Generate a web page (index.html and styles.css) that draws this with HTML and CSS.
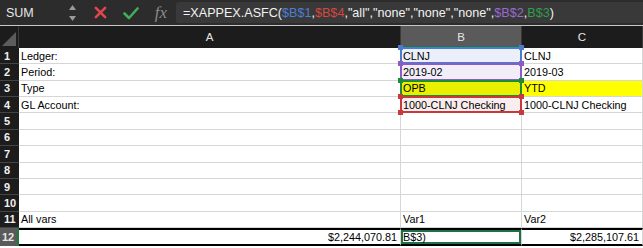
FILE: index.html
```html
<!DOCTYPE html>
<html lang="en">
<head>
    <meta charset="UTF-8">
    <title>Sheet</title>
    <link rel="stylesheet" href="styles.css">
</head>
<body>
    <div class="formula-bar">
        <div class="name-box">SUM</div>
        <div class="stepper">
            <svg width="9" height="22" viewBox="0 0 9 22">
                <path d="M4.5 3 L8 8 L1 8 Z" fill="#9a9a9a"/>
                <path d="M4.5 19 L8 14 L1 14 Z" fill="#9a9a9a"/>
            </svg>
        </div>
        <div class="fb-btn cancel">
            <svg width="13" height="13" viewBox="0 0 14 14">
                <path d="M2 2 L12 12 M12 2 L2 12" stroke="#e0474c" stroke-width="2.8" stroke-linecap="round"/>
            </svg>
        </div>
        <div class="fb-btn enter">
            <svg width="16" height="14" viewBox="0 0 16 14">
                <path d="M1.5 7.5 L6 12 L14.5 2.5" stroke="#3fae5a" stroke-width="2.6" fill="none" stroke-linecap="round" stroke-linejoin="round"/>
            </svg>
        </div>
        <div class="fx">fx</div>
        <div class="formula">=XAPPEX.ASFC(<span class="r-blue">$B$1</span>,<span class="r-red">$B$4</span>,"all","none","none","none",<span class="r-purple">$B$2</span>,<span class="r-green">B$3</span>)</div>
    </div>

    <div class="sheet">
        <div class="corner"></div>
        <div class="col-head">A</div>
        <div class="col-head active">B</div>
        <div class="col-head">C</div>

        <div class="row-head">1</div>
        <div class="cell">Ledger:</div>
        <div class="cell ref bg-blue">CLNJ<span class="box box-blue"><i class="h tl"></i><i class="h tr"></i><i class="h bl"></i><i class="h br"></i></span></div>
        <div class="cell">CLNJ</div>

        <div class="row-head">2</div>
        <div class="cell">Period:</div>
        <div class="cell ref bg-purple">2019-02<span class="box box-purple"><i class="h tl"></i><i class="h tr"></i><i class="h bl"></i><i class="h br"></i></span></div>
        <div class="cell">2019-03</div>

        <div class="row-head">3</div>
        <div class="cell">Type</div>
        <div class="cell ref bg-green">OPB<span class="box box-green"><i class="h tl"></i><i class="h tr"></i><i class="h bl"></i><i class="h br"></i></span></div>
        <div class="cell yellow">YTD</div>

        <div class="row-head">4</div>
        <div class="cell">GL Account:</div>
        <div class="cell ref bg-red">1000-CLNJ Checking<span class="box box-red"><i class="h tl"></i><i class="h tr"></i><i class="h bl"></i><i class="h br"></i></span></div>
        <div class="cell">1000-CLNJ Checking</div>

        <div class="row-head">5</div><div class="cell"></div><div class="cell"></div><div class="cell"></div>
        <div class="row-head">6</div><div class="cell"></div><div class="cell"></div><div class="cell"></div>
        <div class="row-head">7</div><div class="cell"></div><div class="cell"></div><div class="cell"></div>
        <div class="row-head">8</div><div class="cell"></div><div class="cell"></div><div class="cell"></div>
        <div class="row-head">9</div><div class="cell"></div><div class="cell"></div><div class="cell"></div>
        <div class="row-head">10</div><div class="cell"></div><div class="cell"></div><div class="cell"></div>

        <div class="row-head">11</div>
        <div class="cell">All vars</div>
        <div class="cell">Var1</div>
        <div class="cell">Var2</div>

        <div class="row-head active">12</div>
        <div class="cell total num">$2,244,070.81</div>
        <div class="cell total selected">B$3)</div>
        <div class="cell total num">$2,285,107.61</div>
    </div>
</body>
</html>
```

FILE: styles.css
```css
/* Base */
body {
    margin: 0;
    width: 643px;
    height: 248px;
    overflow: hidden;
    background: #fff;
    font-family: "Liberation Sans", Arial, sans-serif;
}

/* Formula bar */
.formula-bar {
    display: flex;
    align-items: center;
    height: 25px;
    background: #2c2c2c;
    border-bottom: 1px solid #c6c6c6;
    color: #fff;
}

.name-box {
    width: 58px;
    padding-left: 6px;
    font-size: 12.5px;
    color: #e8e8e8;
}

.stepper {
    width: 16px;
    display: flex;
    justify-content: center;
}

.fb-btn {
    display: flex;
    justify-content: center;
}

.fb-btn.cancel { width: 40px; }
.fb-btn.enter { width: 22px; }

.fx {
    width: 30px;
    padding-left: 4px;
    text-align: center;
    font-family: "Liberation Serif", serif;
    font-style: italic;
    font-size: 17px;
    color: #8a8a8a;
}

.formula {
    flex: 1;
    align-self: stretch;
    display: flex;
    align-items: center;
    margin: 2px 0;
    padding-left: 7px;
    background: #393939;
    border-radius: 3px 0 0 3px;
    font-size: 12.6px;
    color: #f2f2f2;
    white-space: nowrap;
}

.r-blue { color: #4b7fd6; }
.r-red { color: #d5473f; }
.r-purple { color: #9a68d4; }
.r-green { color: #2e9e4c; }

/* Grid */
.sheet {
    display: grid;
    grid-template-columns: 19px 382px 121px 1fr;
    grid-template-rows: 22px repeat(11, 16.36px) 18px;
    font-size: 10.8px;
}

.corner {
    background: #1c1c1c;
    border-right: 1px solid #3a3a3a;
    position: relative;
}

.corner::after {
    content: "";
    position: absolute;
    right: 2px;
    bottom: 2px;
    border-style: solid;
    border-width: 0 0 14px 14px;
    border-color: transparent transparent #5c5c5c transparent;
}

.col-head {
    background: #1c1c1c;
    color: #e6e6e6;
    font-size: 11.5px;
    display: flex;
    align-items: center;
    justify-content: center;
    border-right: 1px solid #3a3a3a;
}

.col-head.active {
    background: #5a5a5a;
    box-shadow: inset 0 -2px 0 #1e7a3c;
}

.row-head {
    background: #1c1c1c;
    color: #f0f0f0;
    font-weight: bold;
    font-size: 11px;
    display: flex;
    align-items: center;
    padding-left: 4px;
    border-bottom: 1px solid #444;
}

.row-head.active {
    background: #5a5a5a;
    color: #e8e8e8;
    padding-left: 2px;
    box-shadow: inset -2px 0 0 #1e7a3c;
    border-bottom: none;
}

.cell {
    display: flex;
    align-items: center;
    padding-left: 2px;
    border-right: 1px solid #d6d6d6;
    border-bottom: 1px solid #d6d6d6;
    color: #000;
    white-space: nowrap;
    position: relative;
}

.cell.yellow { background: #ffff00; }

.cell.num {
    justify-content: flex-end;
    padding-right: 3px;
}

.cell.total {
    border-top: 2px solid #000;
    border-bottom: 2px solid #000;
}

.cell.selected {
    box-shadow: inset 0 0 0 2px #1e7045;
}

/* Reference highlights */
.bg-blue { background: #ebeff9; }
.bg-purple { background: #f2eef9; }
.bg-green { background: #e8f000; }
.bg-red { background: #faeded; }

.box {
    position: absolute;
    left: -1px;
    top: -1px;
    right: -1px;
    bottom: -1px;
    border: 2px solid;
    z-index: 1;
}

.box-blue { border-color: #4a7cd0; z-index: 1; }
.box-purple { border-color: #8a5cc4; z-index: 2; }
.box-green { border-color: #1f8a3a; z-index: 3; }
.box-red { border-color: #c8383d; z-index: 4; }

.h {
    position: absolute;
    width: 5px;
    height: 5px;
}

.box-blue .h { background: #4a7cd0; }
.box-purple .h { background: #8a5cc4; }
.box-green .h { background: #1f8a3a; }
.box-red .h { background: #c8383d; }

.tl { left: -4px; top: -4px; }
.tr { right: -4px; top: -4px; }
.bl { left: -4px; bottom: -4px; }
.br { right: -4px; bottom: -4px; }
```
